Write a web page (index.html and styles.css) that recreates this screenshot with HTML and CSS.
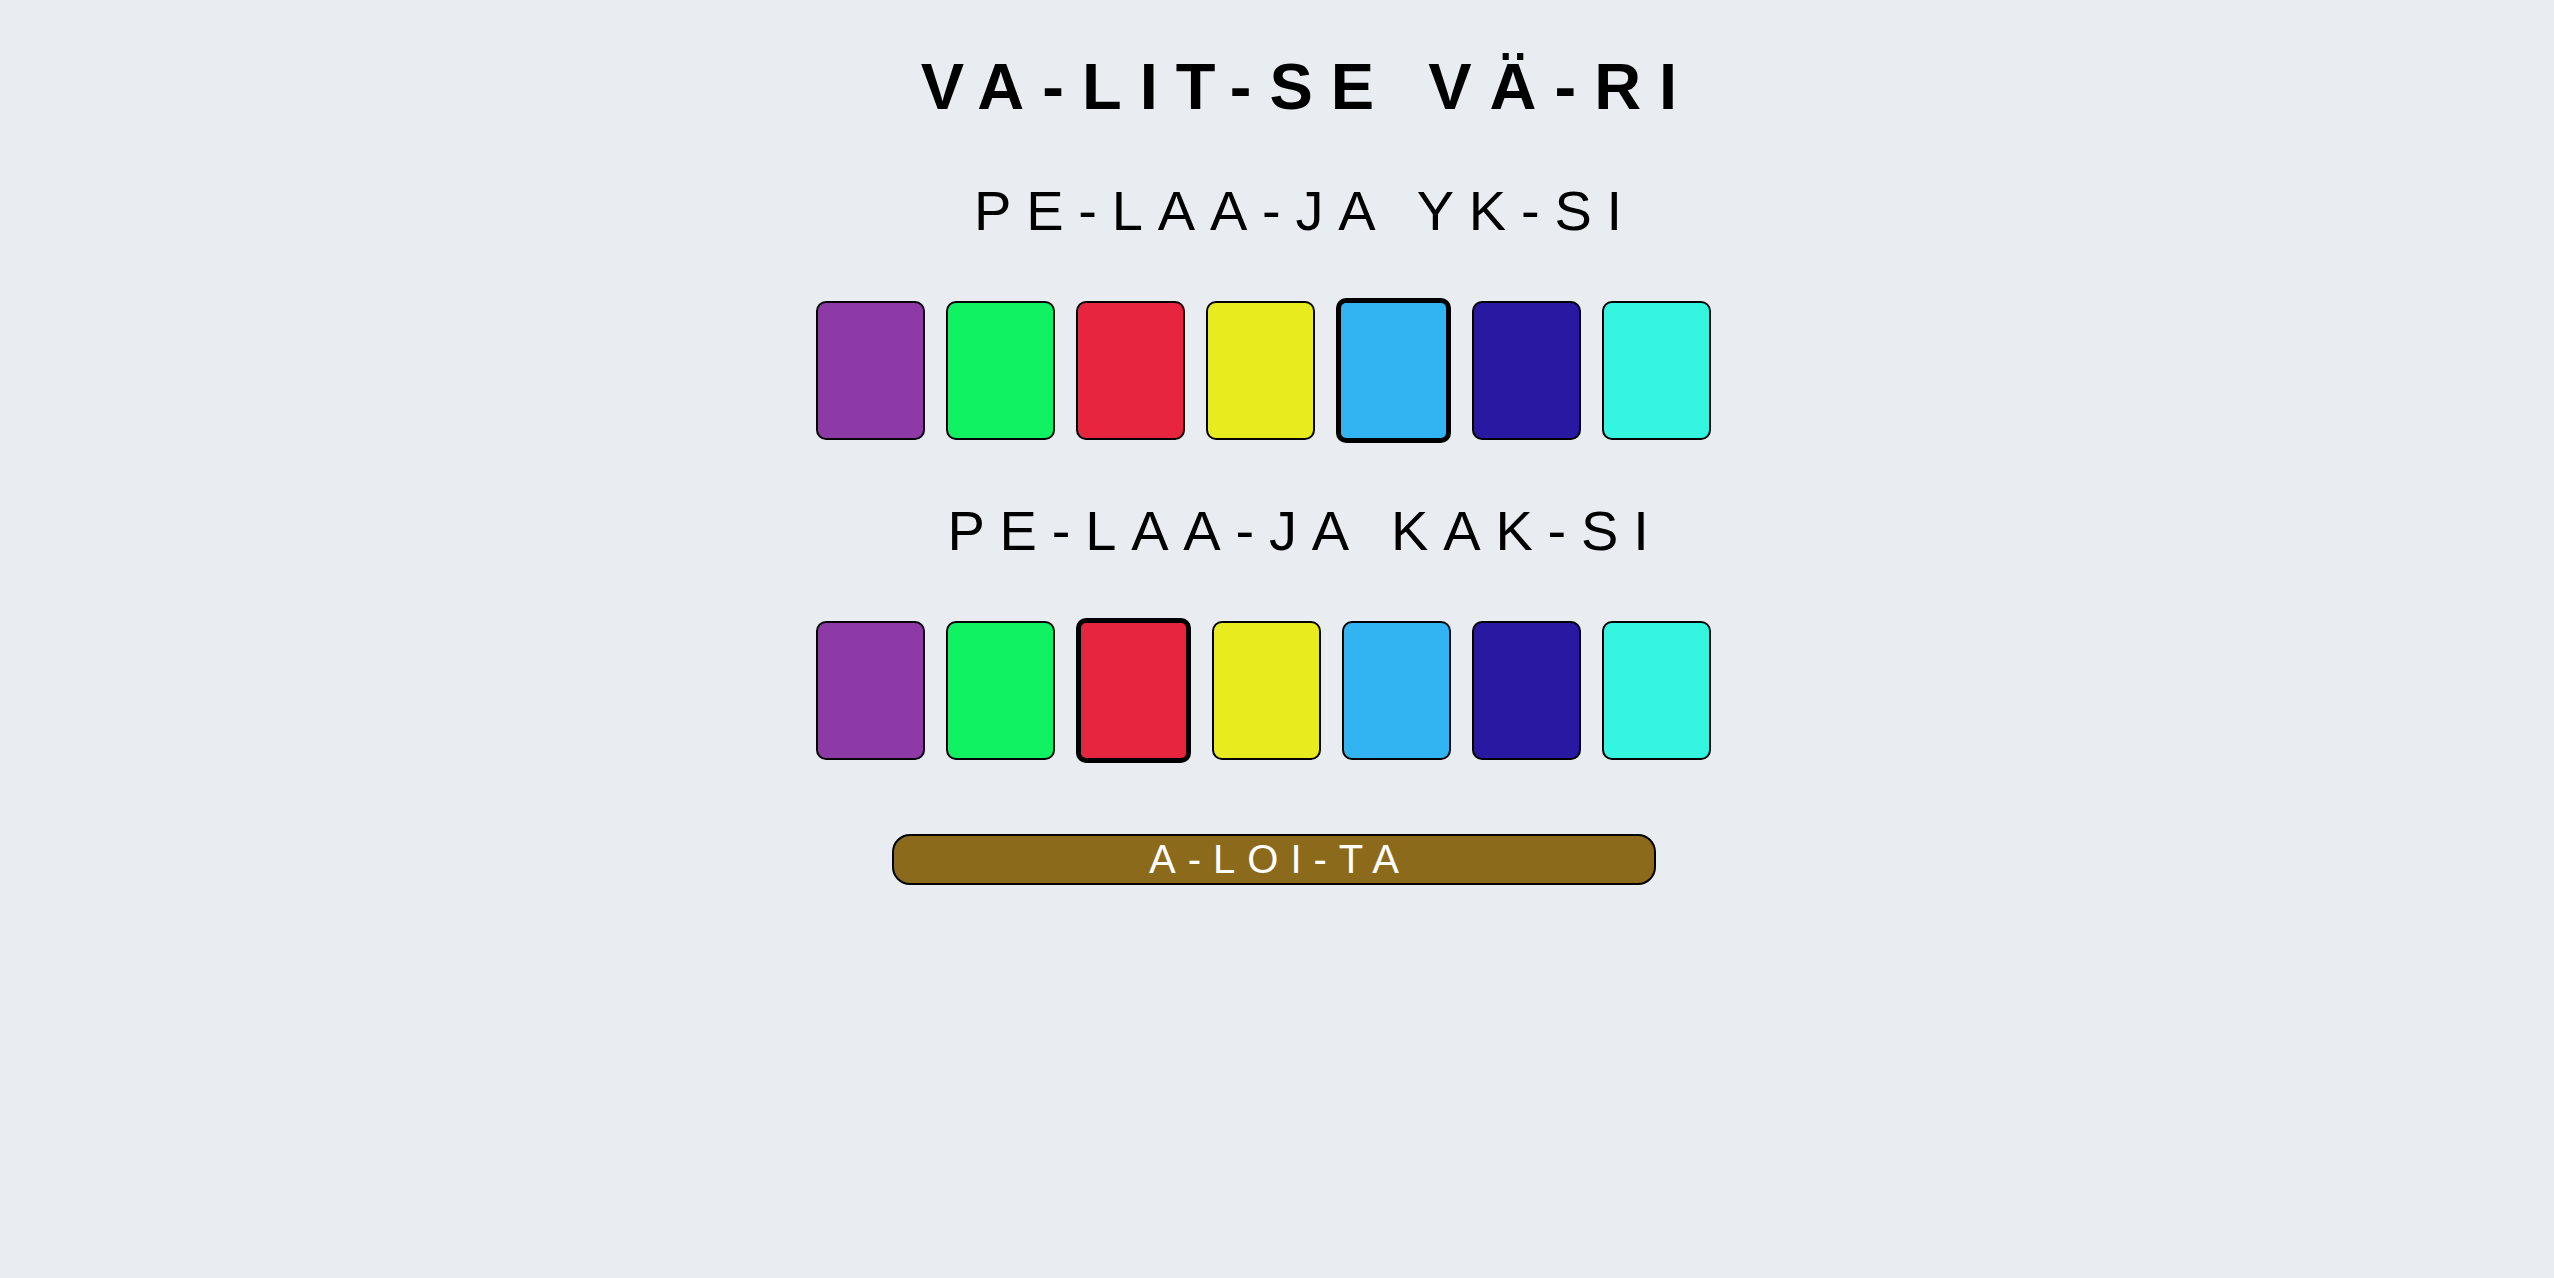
FILE: index.html
```html
<!DOCTYPE html>
<html lang="fi">
<head>
<meta charset="utf-8">
<title>Valitse väri</title>
<link rel="stylesheet" href="styles.css">
</head>
<body>
<main class="page">
  <h1 class="title">VA-LIT-SE VÄ-RI</h1>
  <h2 class="player">PE-LAA-JA YK-SI</h2>
  <div class="swatches">
    <button class="swatch purple"></button>
    <button class="swatch green"></button>
    <button class="swatch red"></button>
    <button class="swatch yellow"></button>
    <button class="swatch sky selected"></button>
    <button class="swatch navy"></button>
    <button class="swatch teal"></button>
  </div>
  <h2 class="player">PE-LAA-JA KAK-SI</h2>
  <div class="swatches">
    <button class="swatch purple"></button>
    <button class="swatch green"></button>
    <button class="swatch red selected"></button>
    <button class="swatch yellow"></button>
    <button class="swatch sky"></button>
    <button class="swatch navy"></button>
    <button class="swatch teal"></button>
  </div>
  <div class="start-wrap">
    <button class="start">A-LOI-TA</button>
  </div>
</main>
</body>
</html>
```

FILE: styles.css
```css
html, body {
  margin: 0;
  padding: 0;
  background: #e9edf2;
}

body {
  font-family: "Liberation Sans", Arial, sans-serif;
  color: #000;
}

.page {
  display: flex;
  flex-direction: column;
  padding-top: 54px;
}

.title {
  margin: 0;
  font-size: 65px;
  line-height: 65px;
  font-weight: bold;
  letter-spacing: 18px;
  text-align: center;
  padding-left: 62px;
}

.player {
  margin: 64px 0 0 0;
  font-size: 56px;
  line-height: 56px;
  font-weight: normal;
  letter-spacing: 14.8px;
  text-align: center;
  padding-left: 57px;
}

.swatches {
  display: flex;
  justify-content: center;
  align-items: center;
  gap: 21px;
  margin-top: 59px;
  padding-right: 27px;
}

.swatches + .player {
  margin-top: 60px;
}

.swatch {
  width: 109px;
  height: 139px;
  box-sizing: border-box;
  border: 2px solid #000;
  border-radius: 10px;
  padding: 0;
  cursor: pointer;
}

.swatch.selected {
  width: 115px;
  height: 145px;
  border-width: 5px;
}

.purple { background: #8e3aa6; }
.green { background: #10f262; }
.red { background: #e8253f; }
.yellow { background: #e8eb1e; }
.sky { background: #33b4f2; }
.navy { background: #2818a2; }
.teal { background: #33f5e0; }

.start-wrap {
  display: flex;
  justify-content: center;
  margin-top: 71px;
  padding-right: 6px;
}

.start {
  width: 764px;
  height: 51px;
  box-sizing: border-box;
  border: 2px solid #000;
  border-radius: 18px;
  background: #8b6a1c;
  color: #fff;
  font-family: "Liberation Sans", Arial, sans-serif;
  font-size: 40px;
  line-height: 47px;
  letter-spacing: 12px;
  padding: 0 0 0 12px;
  text-align: center;
}
```
